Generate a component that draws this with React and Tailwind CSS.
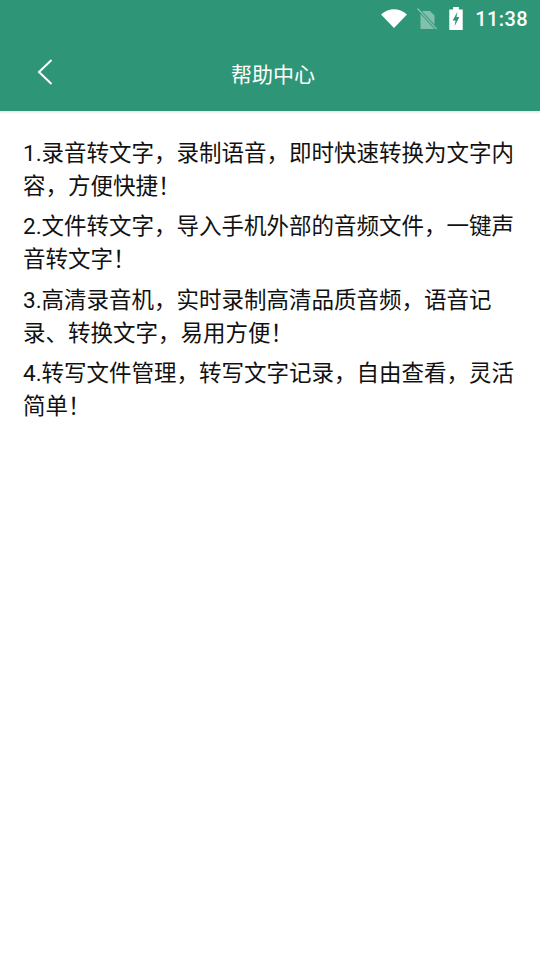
import React from 'react';

const items = [
  ['1.录音转文字，录制语音，即时快速转换为文字内', '容，方便快捷！'],
  ['2.文件转文字，导入手机外部的音频文件，一键声', '音转文字！'],
  ['3.高清录音机，实时录制高清品质音频，语音记', '录、转换文字，易用方便！'],
  ['4.转写文件管理，转写文字记录，自由查看，灵活', '简单！'],
];

const StatusBar = () => (
  <div className="h-[37px] flex items-center justify-end pr-[12px] text-white">
    <svg width="28" height="20" viewBox="0 0 28 20" className="mr-[9px] mt-[-1px]">
      <path d="M1 6.5 C9 -0.5 19 -0.5 27 6.5 L14 20 Z" fill="#fff" />
    </svg>
    <svg width="20" height="22" viewBox="0 0 20 22" className="mr-[12px]">
      <path d="M3.5 3 H13 L17.5 7.5 V21 H3.5 Z" fill="#fff" fillOpacity="0.4" />
      <path d="M0 0 L20 21.5" stroke="#2e9676" strokeWidth="3" />
      <path d="M0.5 0.5 L19.5 21" stroke="#fff" strokeOpacity="0.4" strokeWidth="1.4" />
    </svg>
    <svg width="14" height="23" viewBox="0 0 14 24" className="mr-[12px]">
      <path d="M4 0 H10 V2.5 H14 V24 H0 V2.5 H4 Z" fill="#fff" />
      <path d="M8.5 5 L3.5 14 H6.5 L5.5 20 L10.5 10.5 H7.5 Z" fill="#2e9676" />
    </svg>
    <span className="text-[20px] leading-none font-medium tracking-[0.4px]">11:38</span>
  </div>
);

const Header = () => (
  <div className="h-[74px] relative flex items-center justify-center pl-[6px]">
    <svg width="16" height="26" viewBox="0 0 16 26" className="absolute left-[37px] top-[22px]">
      <path d="M14.5 1 L2 13 L14.5 25" fill="none" stroke="#fff" strokeWidth="2" />
    </svg>
    <span className="text-[21px] text-white leading-none mt-[2px]">帮助中心</span>
  </div>
);

export default function App() {
  return (
    <div className="w-[540px] h-[960px] bg-white overflow-hidden font-['Roboto','Noto_Sans_CJK_SC',sans-serif]">
      <div className="bg-[#2e9676]">
        <StatusBar />
        <Header />
      </div>
      <div className="h-[3px] bg-gradient-to-b from-[#e4e4e4] to-white" />
      <div className="pl-[23px] pt-[23px] flex flex-col gap-[7.3px]">
        {items.map((lines) => (
          <div key={lines[0]} className="text-[22.5px] leading-[33px] text-[#111]">
            {lines.map((l) => (
              <div key={l} className="whitespace-nowrap">{l}</div>
            ))}
          </div>
        ))}
      </div>
    </div>
  );
}
